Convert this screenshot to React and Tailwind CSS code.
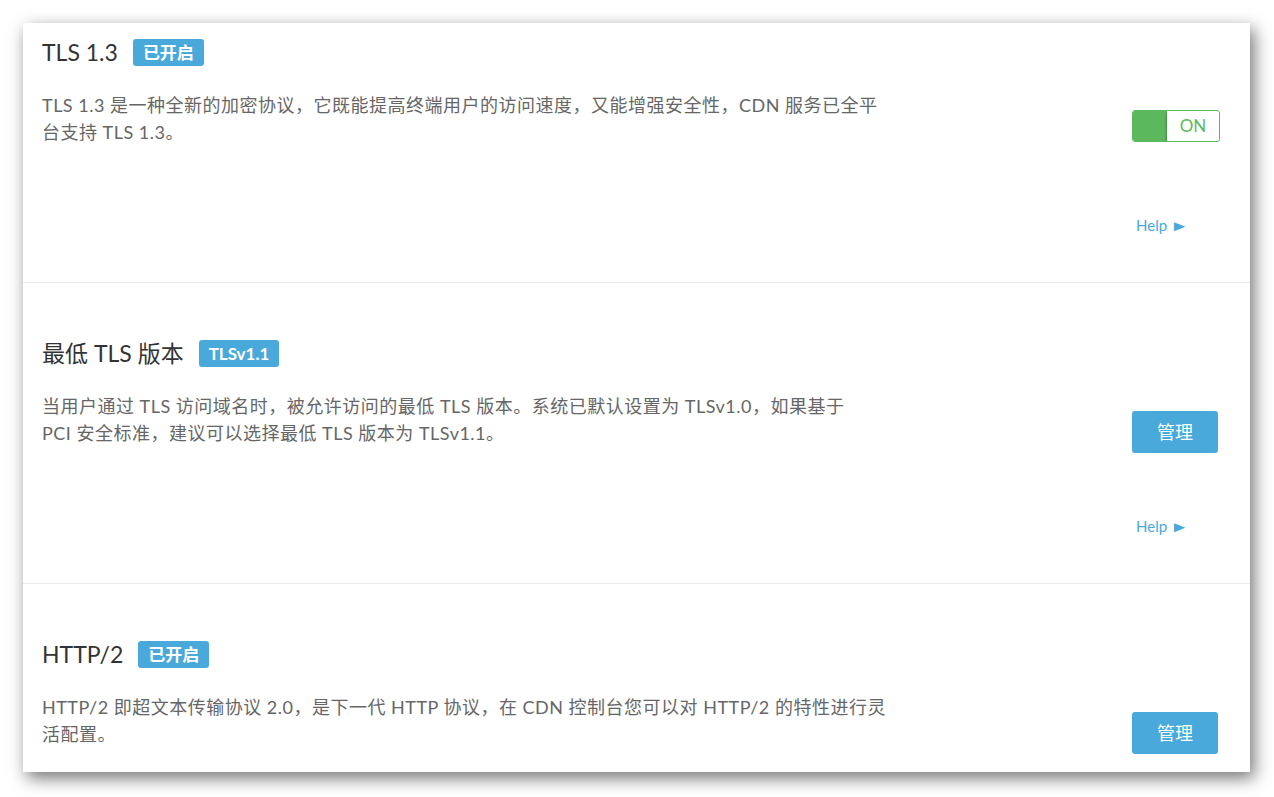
import React from 'react';

const font = { fontFamily: 'Lato, "Noto Sans CJK SC", sans-serif' };

const sections = [
  {
    title: 'TLS 1.3',
    badge: '已开启',
    desc: ['TLS 1.3 是一种全新的加密协议，它既能提高终端用户的访问速度，又能增强安全性，CDN 服务已全平', '台支持 TLS 1.3。'],
    control: 'toggle',
    top: 'pt-[15px]',
  },
  {
    title: '最低 TLS 版本',
    badge: 'TLSv1.1',
    desc: ['当用户通过 TLS 访问域名时，被允许访问的最低 TLS 版本。系统已默认设置为 TLSv1.0，如果基于', 'PCI 安全标准，建议可以选择最低 TLS 版本为 TLSv1.1。'],
    control: 'button',
    top: 'pt-[56px]',
  },
  {
    title: 'HTTP/2',
    badge: '已开启',
    desc: ['HTTP/2 即超文本传输协议 2.0，是下一代 HTTP 协议，在 CDN 控制台您可以对 HTTP/2 的特性进行灵', '活配置。'],
    control: 'button',
    top: 'pt-[56px]',
  },
];

const Toggle = () => (
  <div className="flex h-[32px] w-[88px] overflow-hidden rounded-[3px] border border-[#5cb85c]">
    <div className="w-[34px] bg-[#5cb85c]" />
    <div className="flex flex-1 items-center justify-center rounded-[2px] bg-white text-[17px] text-[#5cb85c] shadow-[-1px_1px_2px_rgba(0,0,0,0.25)]">
      ON
    </div>
  </div>
);

const ManageButton = () => (
  <button className="h-[42px] w-[86px] rounded-[3px] bg-[#4aa9db] text-[18px] text-white">管理</button>
);

const Section = ({ s, last }) => (
  <div className={`flex ${s.top} pb-[47px] ${last ? '' : 'border-b border-[#ebebeb]'}`}>
    <div className="flex-1 pl-[19px]">
      <div className="flex h-[28px] items-center gap-[15px]">
        <span className="text-[23px] text-[#333]">{s.title}</span>
        <span className="rounded-[3px] bg-[#4aa9db] px-[10px] text-[17px] font-bold leading-[27px] text-white">
          {s.badge}
        </span>
      </div>
      <p className="mt-[26px] w-[880px] text-[18px] leading-[27px] tracking-[0.5px] text-[#666]">
        {s.desc[0]}
        <br />
        {s.desc[1]}
      </p>
    </div>
    <div className="mr-[32px] w-[86px] pt-[72px]">
      <div className="h-[42px]">{s.control === 'toggle' ? <Toggle /> : <ManageButton />}</div>
      {!last && (
        <div className="ml-[4px] mt-[63px] flex items-center gap-[5px] text-[15px] leading-[20px] text-[#4aa9db]">
          Help <span className="scale-x-125 text-[15px]">►</span>
        </div>
      )}
    </div>
  </div>
);

export default function App() {
  return (
    <div className="min-h-screen bg-white pl-[23px] pt-[23px]" style={font}>
      <div className="h-[749px] w-[1227px] overflow-hidden bg-white shadow-[4px_6px_16px_rgba(0,0,0,0.55)]">
        {sections.map((s, i) => (
          <Section key={i} s={s} last={i === sections.length - 1} />
        ))}
      </div>
    </div>
  );
}
